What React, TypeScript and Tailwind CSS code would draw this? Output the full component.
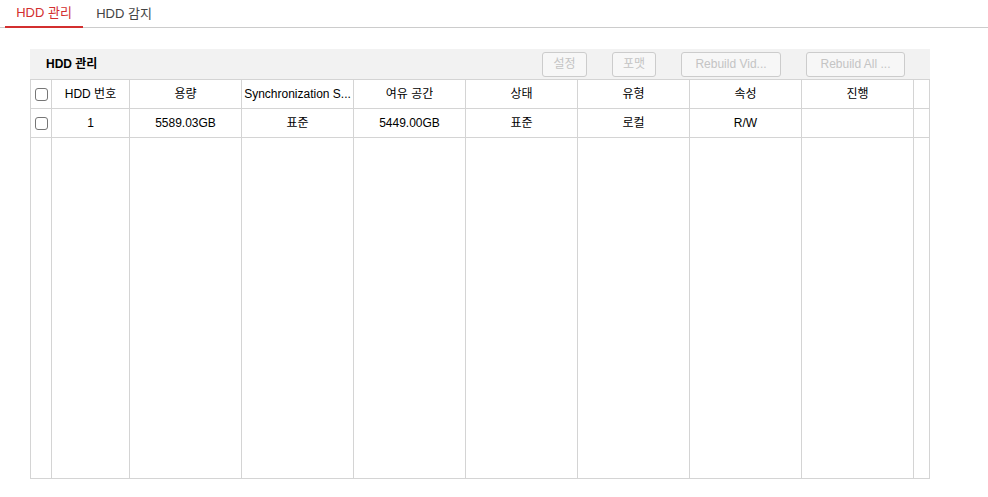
import React from 'react';

const font = { fontFamily: '"Liberation Sans", Arial, "Noto Sans CJK KR", sans-serif' };

const columns = ['HDD 번호', '용량', 'Synchronization S...', '여유 공간', '상태', '유형', '속성', '진행'];
const rows = [['1', '5589.03GB', '표준', '5449.00GB', '표준', '로컬', 'R/W', '']];

const grid = 'grid grid-cols-[21px_78px_repeat(7,112px)_1fr]';

const Checkbox: React.FC = () => (
  <span className="block w-[13px] h-[13px] rounded-[3px] border border-[#767676] bg-white" />
);

const ActionButton: React.FC<{ label: string; width: string }> = ({ label, width }) => (
  <button
    disabled
    className={`${width} h-[25px] rounded-[3px] border border-[#cccccc] bg-[#f7f7f7] text-[12px] text-[#c4c4c4] px-2 truncate`}
  >
    {label}
  </button>
);

const App: React.FC = () => {
  return (
    <div className="w-[988px] h-[497px] bg-white text-black" style={font}>
      {/* Tabs */}
      <div className="flex pl-[5px] h-[28px] border-b border-[#cccccc]">
        <div className="w-[78px] -mb-px flex items-center justify-center border-b-2 border-[#d32f2f] text-[13px] text-[#d32f2f]">
          HDD 관리
        </div>
        <div className="w-[82px] flex items-center justify-center text-[13px] text-[#444]">HDD 감지</div>
      </div>

      {/* Panel */}
      <div className="ml-[30px] mt-[21px] w-[900px]">
        <div className="h-[30px] bg-[#f2f2f2] flex items-center pl-[16px] pr-[25px]">
          <span className="text-[12px] font-bold">HDD 관리</span>
          <div className="ml-auto flex gap-[25px]">
            <ActionButton label="설정" width="w-[45px]" />
            <ActionButton label="포맷" width="w-[44px]" />
            <ActionButton label="Rebuild Vid..." width="w-[100px]" />
            <ActionButton label="Rebuild All ..." width="w-[99px]" />
          </div>
        </div>

        <div className="h-[400px] border border-[#d4d4d4] flex flex-col text-[12px]">
          {/* Header row */}
          <div className={`${grid} h-[29px] border-b border-[#d4d4d4]`}>
            <div className="border-r border-[#d4d4d4] flex items-center justify-center pl-px">
              <Checkbox />
            </div>
            {columns.map((c) => (
              <div key={c} className="border-r border-[#d4d4d4] flex items-center justify-center px-[2px] truncate">
                <span className="truncate">{c}</span>
              </div>
            ))}
            <div />
          </div>

          {/* Data rows */}
          {rows.map((r, i) => (
            <div key={i} className={`${grid} h-[29px] border-b border-[#d4d4d4]`}>
              <div className="border-r border-[#d4d4d4] flex items-center justify-center pl-px">
                <Checkbox />
              </div>
              {r.map((v, j) => (
                <div key={j} className="border-r border-[#d4d4d4] flex items-center justify-center">
                  {v}
                </div>
              ))}
              <div />
            </div>
          ))}

          {/* Empty area */}
          <div className={`${grid} flex-1`}>
            {Array.from({ length: 9 }).map((_, i) => (
              <div key={i} className="border-r border-[#d4d4d4]" />
            ))}
            <div />
          </div>
        </div>
      </div>
    </div>
  );
};

export default App;
